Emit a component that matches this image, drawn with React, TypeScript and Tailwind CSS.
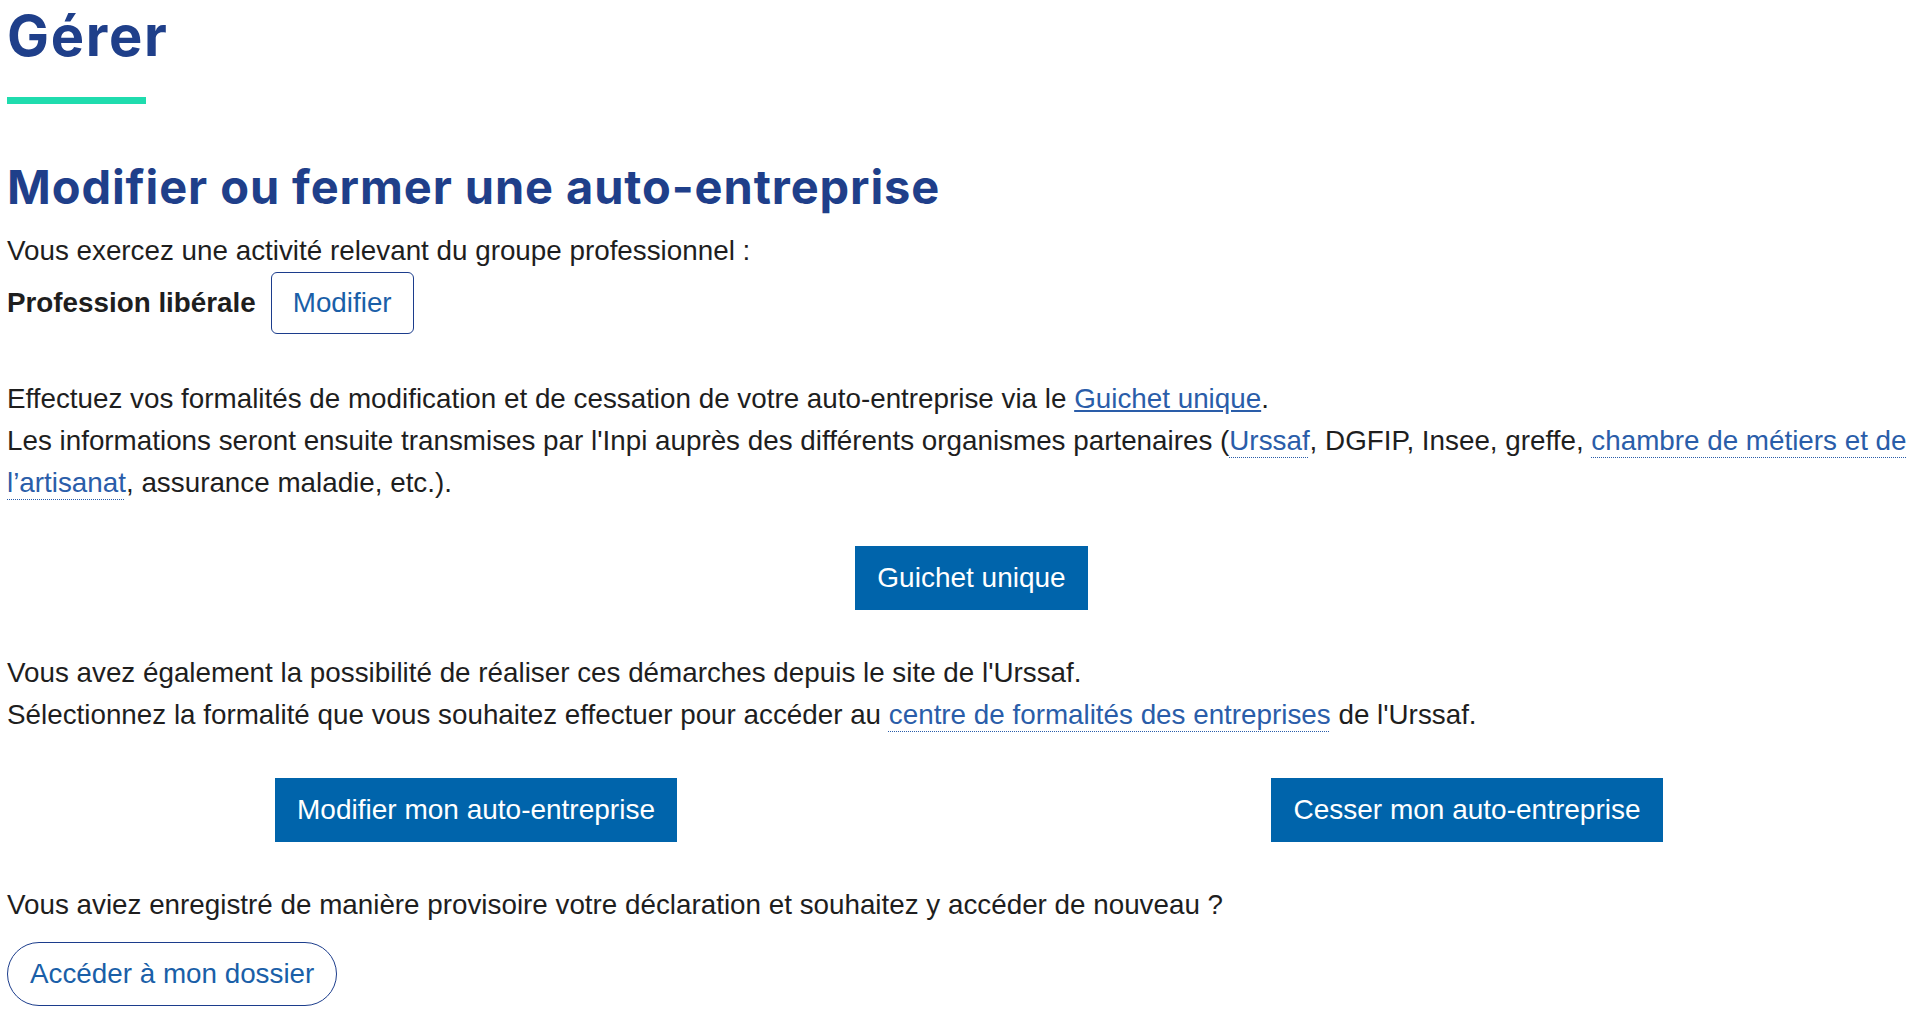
import React from 'react'

const body = { fontFamily: '"Liberation Sans", Arial, sans-serif' }
const title = { fontFamily: 'Inter, "Noto Sans", sans-serif' }

function FilledButton({ children }: { children: React.ReactNode }) {
  return (
    <button className="bg-[#0064ab] px-[22px] py-[11px] text-[28px] leading-[42px] text-white">
      {children}
    </button>
  )
}

function DottedLink({ children }: { children: React.ReactNode }) {
  return (
    <a href="#" className="text-[#2a5da9] underline decoration-dotted decoration-1 underline-offset-[7px]">
      {children}
    </a>
  )
}

export default function App() {
  return (
    <div className="min-h-screen w-full overflow-hidden bg-white">
      <div className="ml-[7px] w-[1929px] pt-[8px] text-[27.8px] leading-[42px] text-[#1e1e1e]" style={body}>
        <h1 className="text-[56px] font-bold leading-[56px] tracking-[1.7px] text-[#1f3f8a]" style={title}>Gérer</h1>
        <div className="mt-[33px] h-[7px] w-[139px] bg-[#1fdcae]" />

        <h2 className="mt-[59px] text-[47px] font-bold leading-[47px] tracking-[0.9px] text-[#1f3f8a]" style={title}>
          Modifier ou fermer une auto-entreprise
        </h2>

        <p className="mt-[20px]">Vous exercez une activité relevant du groupe professionnel :</p>
        <div className="flex items-center gap-[15px]">
          <strong className="font-bold">Profession libérale</strong>
          <button className="rounded-[6px] border border-[#1c3d8c] px-[21px] py-[9px] text-[#1a5fa8]">Modifier</button>
        </div>

        <p className="mt-[44px]">
          Effectuez vos formalités de modification et de cessation de votre auto-entreprise via le{' '}
          <a href="#" className="text-[#2a5da9] underline">Guichet unique</a>.
          <br />
          Les informations seront ensuite transmises par l'Inpi auprès des différents organismes partenaires (
          <DottedLink>Urssaf</DottedLink>, DGFIP, Insee, greffe, <DottedLink>chambre de métiers et de l’artisanat</DottedLink>,
          assurance maladie, etc.).
        </p>

        <div className="mt-[42px] flex justify-center">
          <FilledButton>Guichet unique</FilledButton>
        </div>

        <p className="mt-[42px]">
          Vous avez également la possibilité de réaliser ces démarches depuis le site de l'Urssaf.
          <br />
          Sélectionnez la formalité que vous souhaitez effectuer pour accéder au{' '}
          <DottedLink>centre de formalités des entreprises</DottedLink> de l'Urssaf.
        </p>

        <div className="mt-[42px] grid grid-cols-2 gap-[53px]">
          <div className="flex justify-center">
            <FilledButton>Modifier mon auto-entreprise</FilledButton>
          </div>
          <div className="flex justify-center">
            <FilledButton>Cesser mon auto-entreprise</FilledButton>
          </div>
        </div>

        <p className="mt-[42px]">Vous aviez enregistré de manière provisoire votre déclaration et souhaitez y accéder de nouveau ?</p>
        <button className="mt-[16px] rounded-full border border-[#1c3d8c] px-[22px] py-[10px] text-[#1a5fa8]">
          Accéder à mon dossier
        </button>
      </div>
    </div>
  )
}
